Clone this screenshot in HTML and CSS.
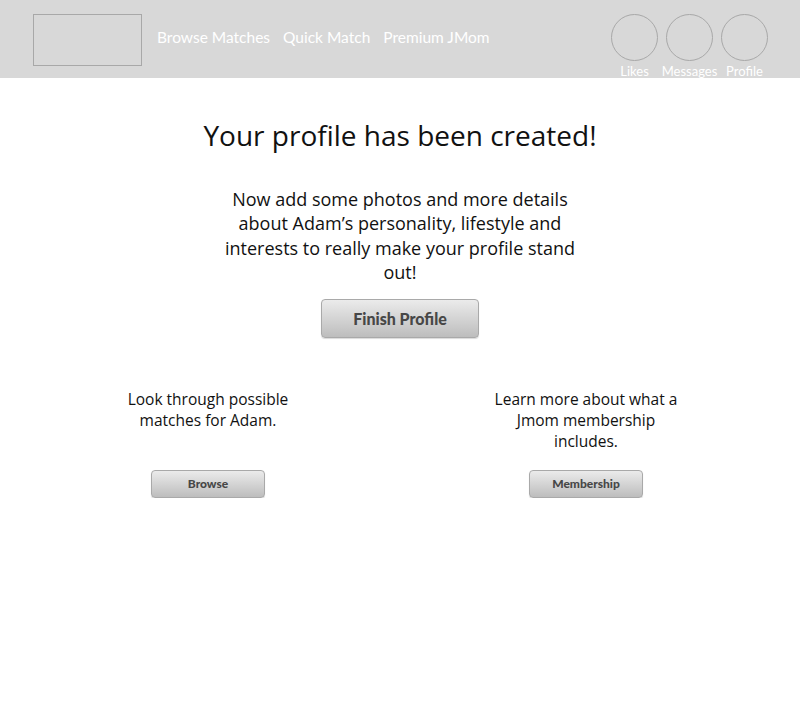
FILE: index.html
```html
<!DOCTYPE html>
<html>
<head>
<meta charset="utf-8">
<link rel="stylesheet" href="styles.css">
</head>
<body>
<header class="topbar">
  <div class="logo"></div>
  <nav class="nav">
    <a class="nav-link">Browse Matches</a>
    <a class="nav-link">Quick Match</a>
    <a class="nav-link">Premium JMom</a>
  </nav>
  <div class="icons">
    <div class="icon-item"><div class="circle"></div><span class="icon-label">Likes</span></div>
    <div class="icon-item"><div class="circle"></div><span class="icon-label">Messages</span></div>
    <div class="icon-item"><div class="circle"></div><span class="icon-label">Profile</span></div>
  </div>
</header>
<main class="main">
  <h1 class="title">Your profile has been created!</h1>
  <p class="lead">Now add some photos and more details about Adam’s personality, lifestyle and interests to really make your profile stand out!</p>
  <button class="btn btn-large">Finish Profile</button>
  <section class="columns">
    <div class="col">
      <p class="col-text">Look through possible matches for Adam.</p>
      <button class="btn btn-small">Browse</button>
    </div>
    <div class="col">
      <p class="col-text">Learn more about what a Jmom membership includes.</p>
      <button class="btn btn-small">Membership</button>
    </div>
  </section>
</main>
</body>
</html>
```

FILE: styles.css
```css
* { box-sizing: border-box; }
body {
  margin: 0;
  background: #fff;
  font-family: "Open Sans", "DejaVu Sans", sans-serif;
  color: #111;
}
.topbar {
  height: 78px;
  background: #d8d8d8;
  display: flex;
  align-items: flex-start;
  padding-left: 33px;
}
.logo {
  width: 109px;
  height: 52px;
  margin-top: 14px;
  border: 1px solid #a8a8a8;
}
.nav {
  display: flex;
  gap: 13px;
  margin-left: 15px;
  margin-top: 28px;
}
.nav-link {
  font-family: Lato, "Liberation Sans", sans-serif;
  font-size: 15.5px;
  color: #fff;
}
.icons {
  display: flex;
  gap: 8px;
  margin-left: auto;
  margin-right: 32px;
  margin-top: 14px;
}
.icon-item {
  width: 47px;
  display: flex;
  flex-direction: column;
  align-items: center;
}
.circle {
  width: 47px;
  height: 47px;
  border-radius: 50%;
  border: 1px solid #a8a8a8;
}
.icon-label {
  font-family: Lato, "Liberation Sans", sans-serif;
  font-size: 13px;
  color: #fff;
  white-space: nowrap;
  margin-top: 2px;
}
.main {
  display: flex;
  flex-direction: column;
  align-items: center;
}
.title {
  font-weight: 400;
  font-size: 28px;
  margin: 37px 0 0;
  line-height: 40px;
}
.lead {
  width: 360px;
  text-align: center;
  font-size: 18px;
  line-height: 24.4px;
  margin: 32px 0 0;
}
.btn {
  font-family: Lato, "Liberation Sans", sans-serif;
  font-weight: 900;
  color: #474747;
  border: 1px solid #a9a9a9;
  border-radius: 4px;
  background: linear-gradient(#ebebeb, #bdbdbd);
  box-shadow: 0 1px 1px rgba(0,0,0,0.15);
  padding: 0;
}
.btn-large {
  width: 158px;
  height: 39px;
  font-size: 16px;
  margin-top: 14px;
}
.btn-small {
  width: 114px;
  height: 28px;
  font-size: 12px;
}
.columns {
  align-self: flex-start;
  display: flex;
  gap: 178px;
  margin-left: 108px;
  margin-top: 51px;
}
.col {
  width: 200px;
  display: flex;
  flex-direction: column;
  align-items: center;
}
.col-text {
  font-size: 15.5px;
  line-height: 21px;
  text-align: center;
  margin: 0;
  height: 81px;
}
```
